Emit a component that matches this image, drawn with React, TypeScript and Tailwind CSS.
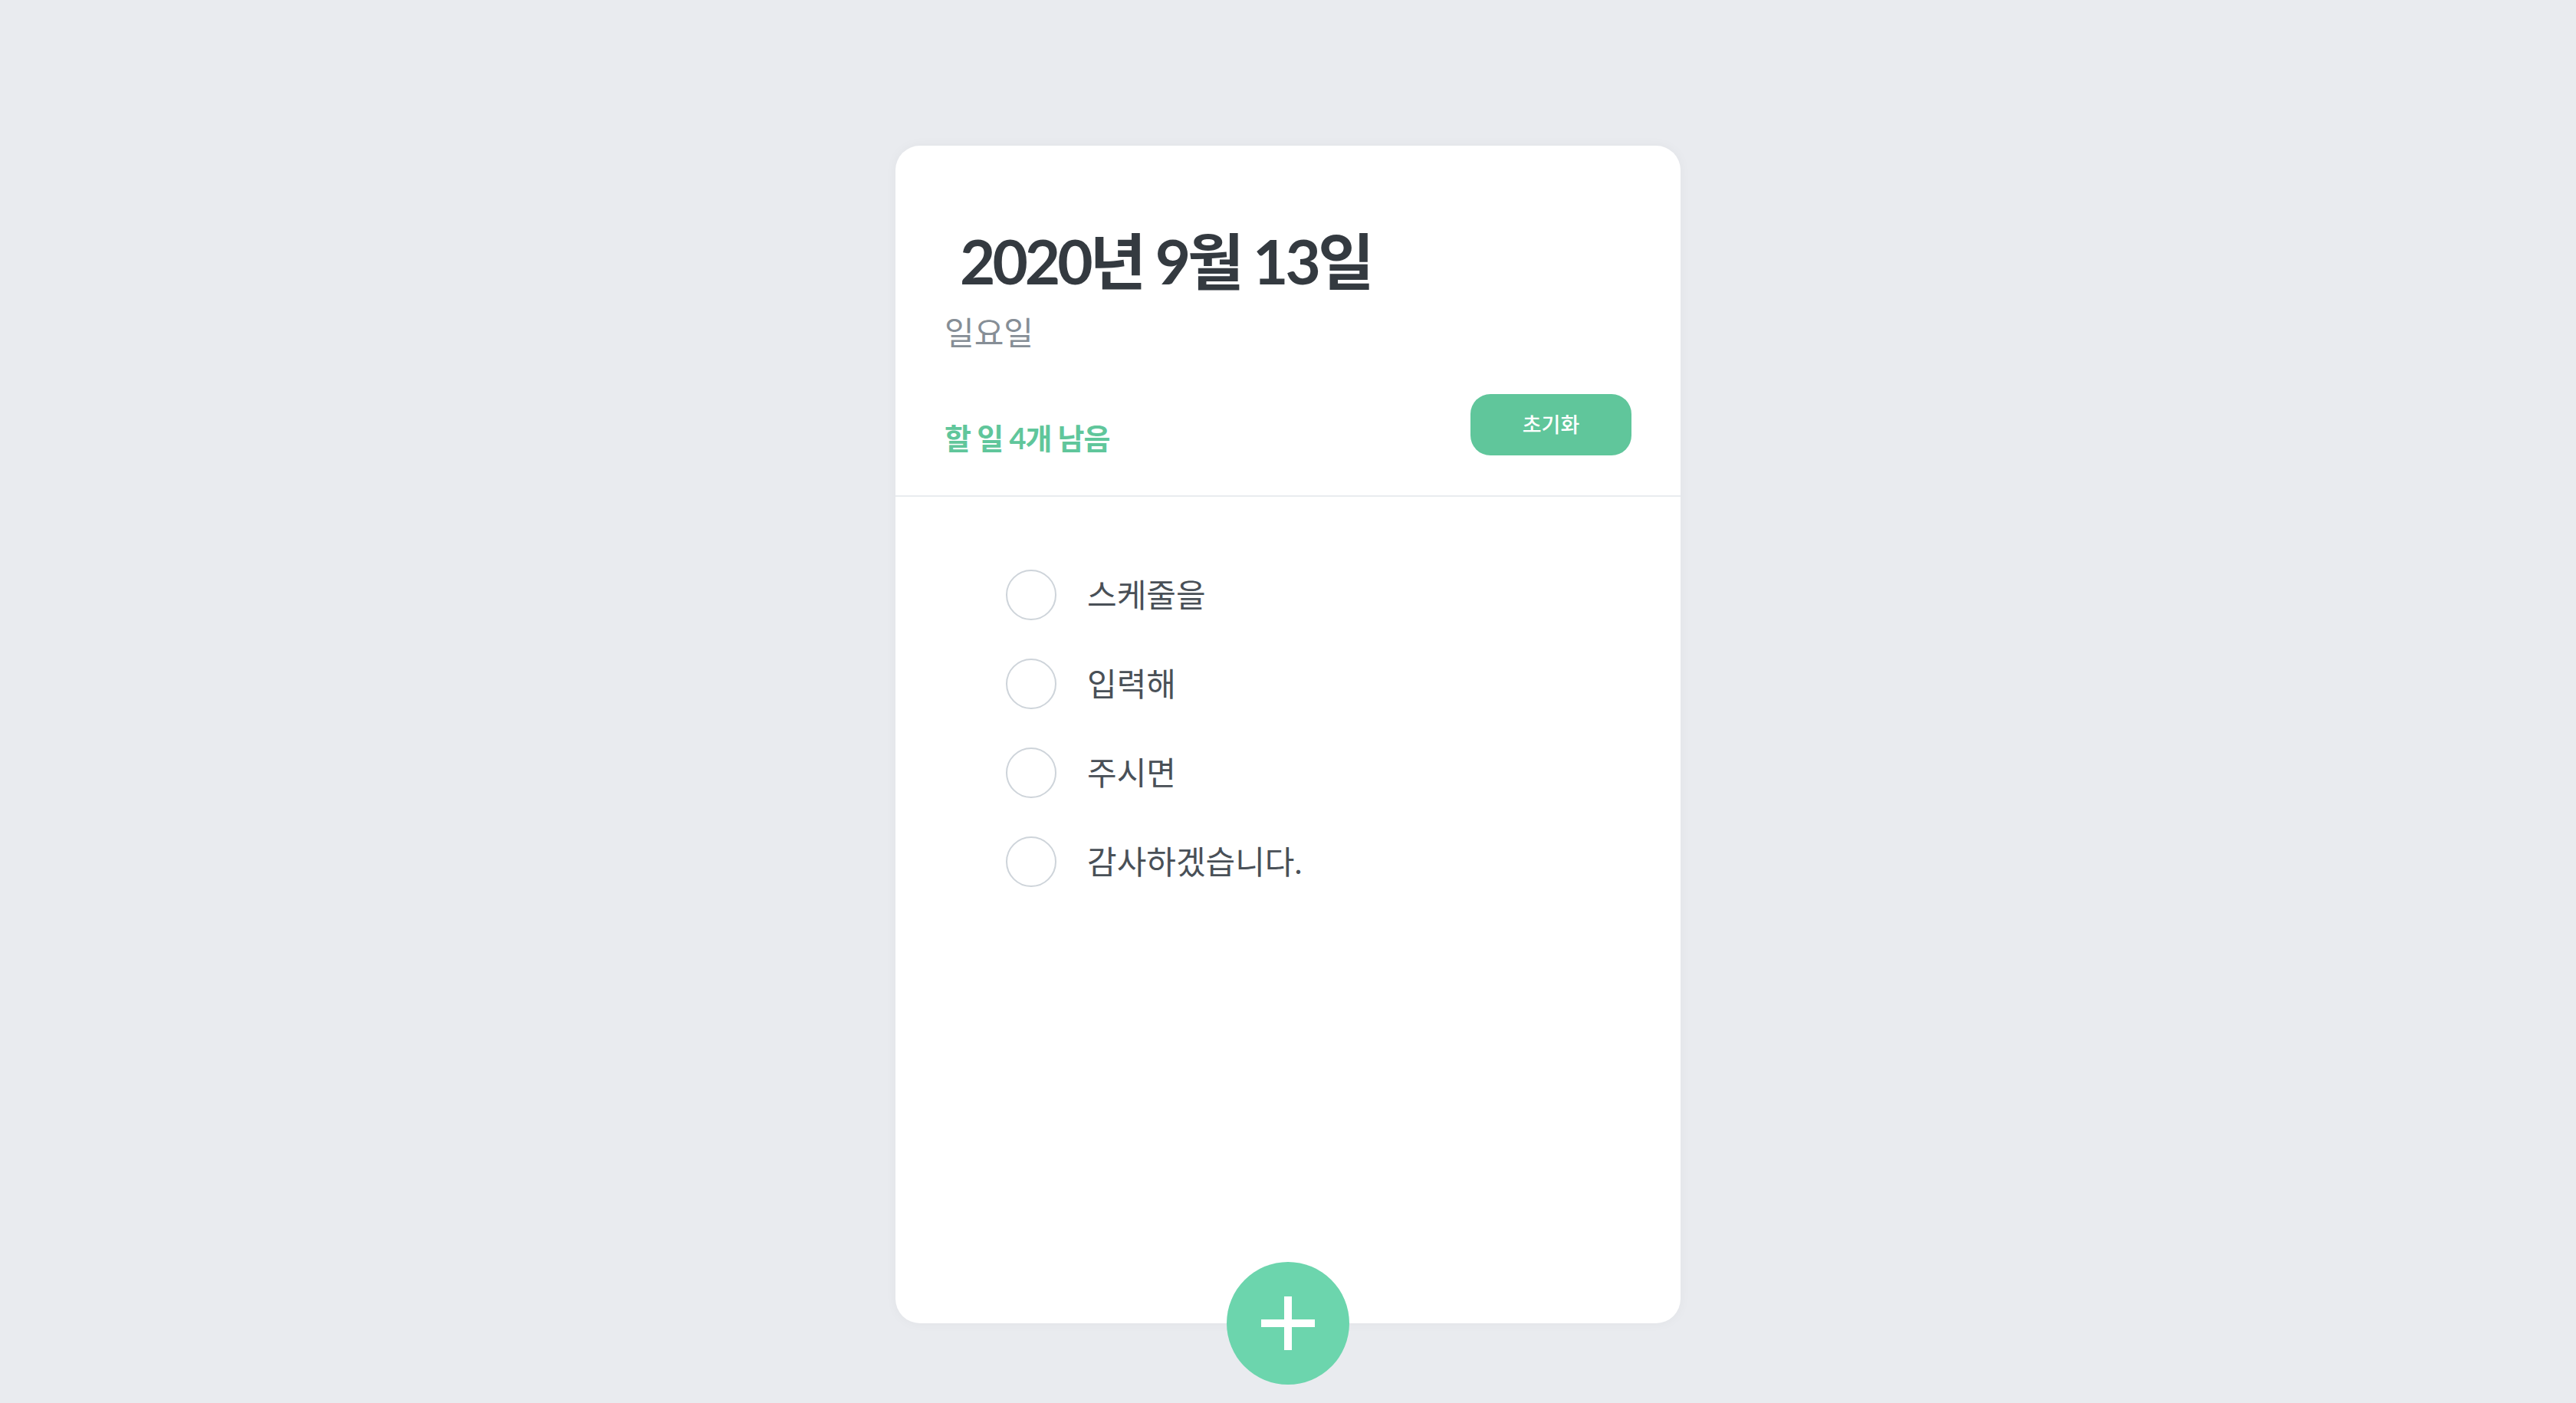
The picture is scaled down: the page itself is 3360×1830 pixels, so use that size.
import React from "react";

const todos = ["스케줄을", "입력해", "주시면", "감사하겠습니다."];

export default function App() {
  return (
    <div
      className="min-h-screen bg-[#e9ebef] pt-[190px]"
      style={{ fontFamily: "Lato, 'Noto Sans CJK KR', sans-serif" }}
    >
      <div className="relative mx-auto flex h-[1536px] w-[1024px] flex-col rounded-[32px] bg-white shadow-[0_0_16px_rgba(0,0,0,0.04)]">
        <div className="border-b-2 border-[#e9ecef] px-[64px] pt-[110px] pb-[52px]">
          <h1 className="ml-[20px] text-[80px] leading-none font-bold tracking-[-4px] text-[#343a40]">
            2020년 9월 13일
          </h1>
          <div className="mt-[33px] text-[42px] leading-none text-[#868e96]">일요일</div>
          <div className="mt-[59px] flex items-end justify-between">
            <div className="mb-[4px] text-[38px] leading-none font-bold tracking-[-1px] text-[#60c69b]">
              할 일 4개 남음
            </div>
            <button className="h-[80px] w-[210px] rounded-[26px] bg-[#60c69b] text-[27px] font-medium text-white">
              초기화
            </button>
          </div>
        </div>

        <div className="flex-1 pt-[70px] pl-[144px]">
          {todos.map((text, idx) => (
            <div key={idx} className="flex items-center py-[25px]">
              <div className="h-[66px] w-[66px] rounded-full border-2 border-[#ced4da]" />
              <div className="ml-[40px] text-[42px] leading-none text-[#495057]">{text}</div>
            </div>
          ))}
        </div>

        <button className="absolute bottom-[-80px] left-1/2 flex h-[160px] w-[160px] -translate-x-1/2 items-center justify-center rounded-full bg-[#6cd5ad]">
          <svg width="70" height="70" viewBox="0 0 70 70">
            <rect x="0" y="30" width="70" height="10" fill="white" />
            <rect x="30" y="0" width="10" height="70" fill="white" />
          </svg>
        </button>
      </div>
    </div>
  );
}
